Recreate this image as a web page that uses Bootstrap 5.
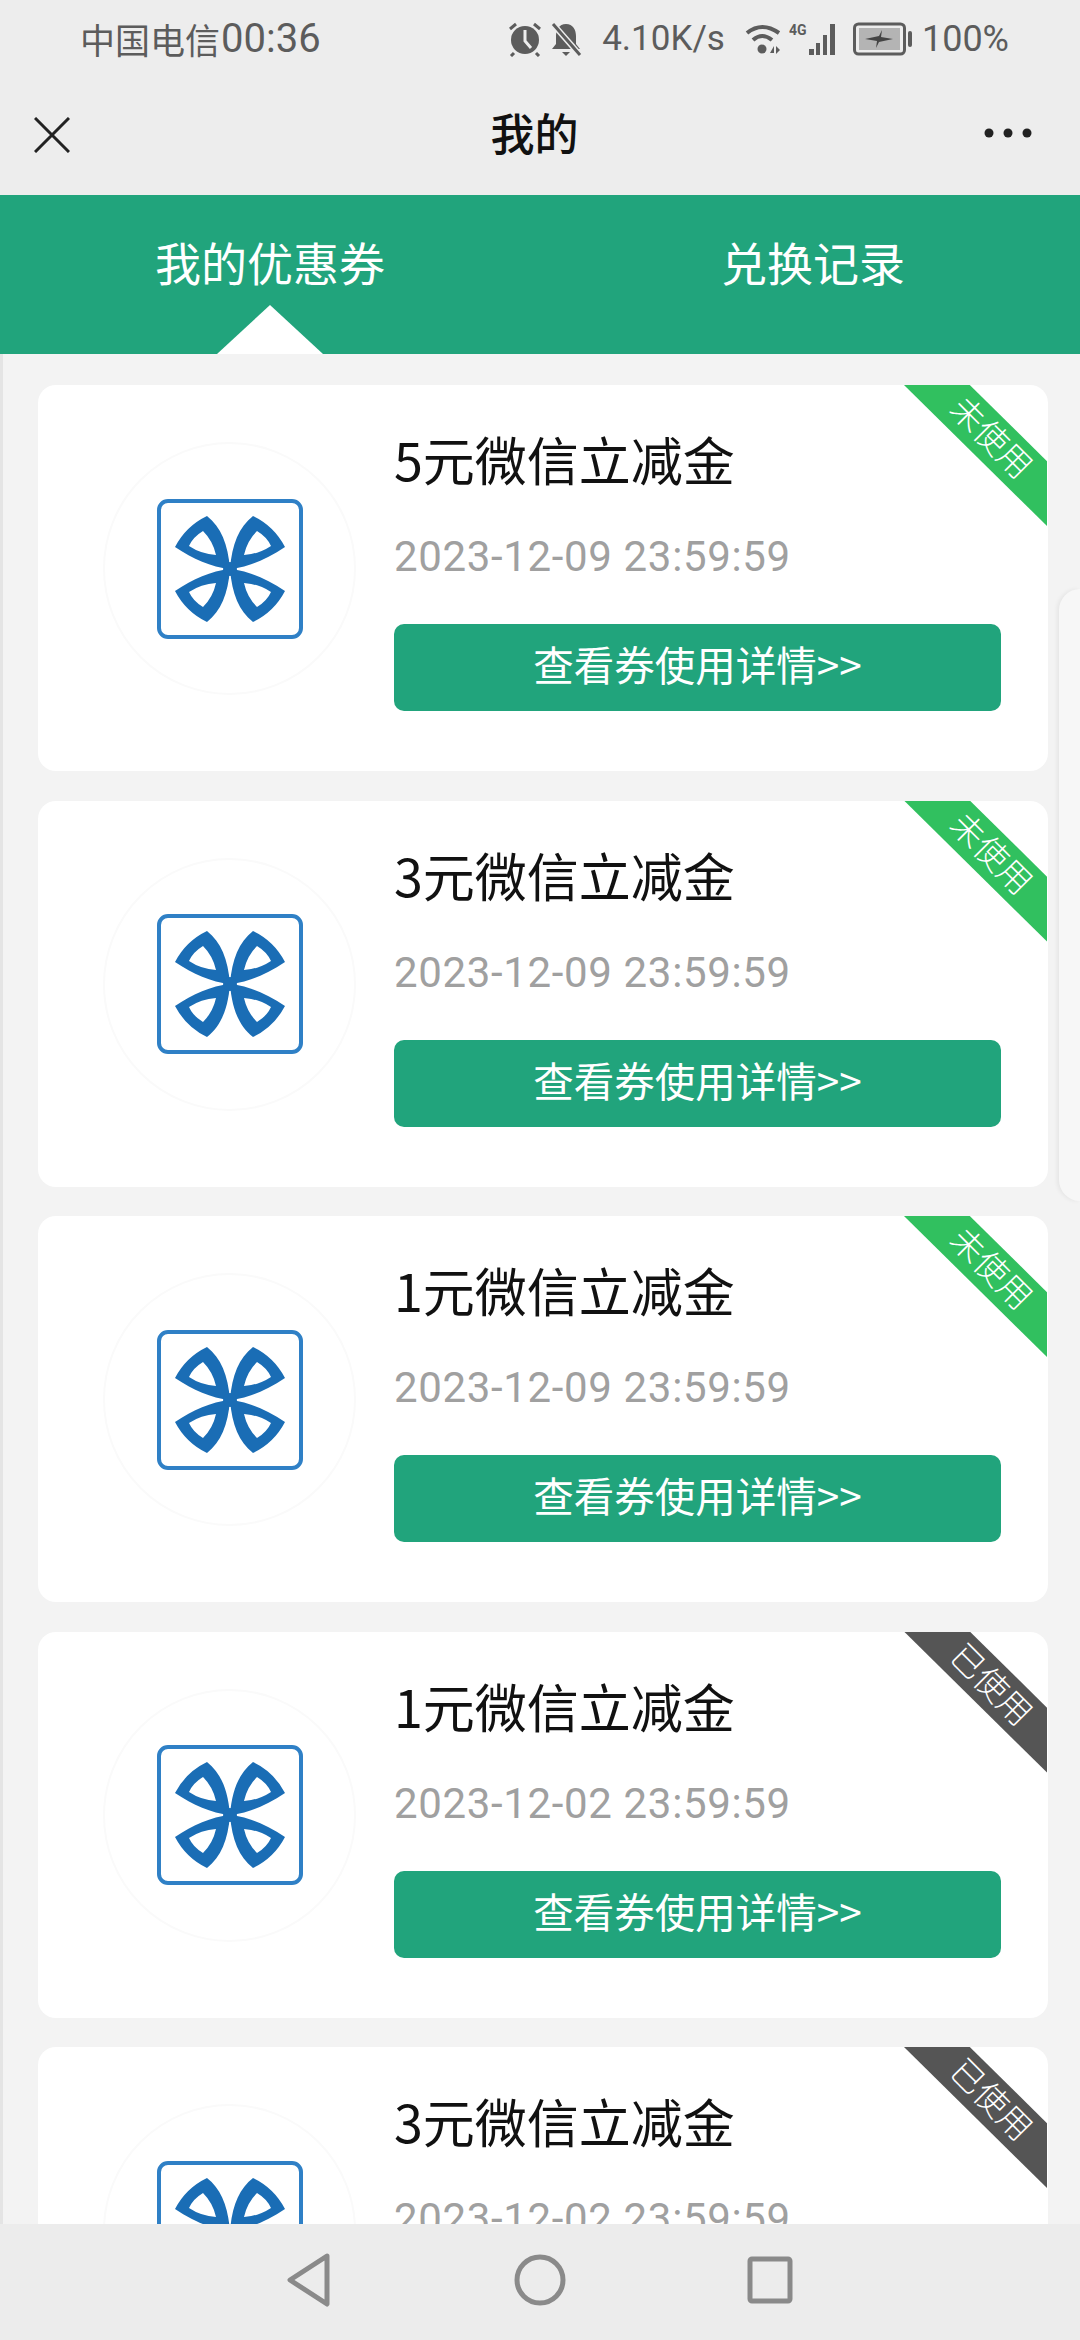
<!DOCTYPE html>
<html lang="zh-CN">
<head>
  <meta charset="UTF-8" />
  <meta name="viewport" content="width=device-width, initial-scale=1" />
  <title>我的</title>
  <link href="https://cdn.jsdelivr.net/npm/bootstrap@5.3.0/dist/css/bootstrap.min.css" rel="stylesheet" />
  <style>
    body {
      width: 1080px;
      height: 2340px;
      overflow: hidden;
      background: #f3f3f3;
      font-family: "Noto Sans CJK SC", "Noto Sans", sans-serif;
    }
    .status-bar { height: 78px; background: #ededed; color: #5c5c5c; font-size: 35px; padding: 0 71px 0 80px; }
    .status-time { font-family: Roboto, sans-serif; font-size: 40px; margin-left: -3px; }
    .status-nums { font-family: Roboto, sans-serif; font-size: 35px; }
    .status-speed { margin: 0 20px 0 4px; }
    .status-battery { margin-left: 14px; }
    .status-pct { margin-left: 9px; font-size: 36px; }
    .title-bar { height: 117px; background: #ededed; padding: 0 48px 0 34px; position: relative; }
    .title-text { position: absolute; left: 0; right: 0; top: 24px; text-align: center; font-size: 44px; font-weight: 500; color: #111; line-height: 60px; margin-left: -11px; }
    .tab-bar { height: 159px; background: #21a47c; color: #fff; font-size: 46px; }
    .tab-item { width: 540px; height: 132px; position: relative; }
    .tab-item-right { padding-left: 6px; }
    .tab-arrow { position: absolute; left: 217px; bottom: -27px; width: 106px; height: 49px; background: #fff; clip-path: polygon(50% 0, 100% 100%, 0 100%); }
    .coupon-list { height: 1870px; overflow: hidden; position: relative; padding: 31px 32px 0 35px; border-left: 3px solid #e4e4e4; gap: 29.5px; }
    .coupon { height: 386px; flex: 0 0 386px; background: #fff; border-radius: 18px; position: relative; padding-left: 65px; }
    .logo-circle { width: 253px; height: 253px; margin-top: 57px; border-radius: 50%; border: 2px solid #fafafa; }
    .logo-img { width: 146px; height: 140px; filter: blur(.6px); }
    .coupon-body { width: 607px; margin-left: 38px; padding-top: 39px; }
    .coupon-title { font-size: 52px; line-height: 70px; color: #111; margin-bottom: 38px; white-space: nowrap; }
    .coupon-date { font-family: Roboto, sans-serif; font-size: 42px; line-height: 50px; color: #a0a0a0; margin-bottom: 42px; letter-spacing: .65px; white-space: nowrap; }
    .coupon-btn { height: 87px; width: 607px; background: #21a47c; border: 0; border-radius: 10px; color: #fff; font-size: 40.500px; padding: 0 0 6px; }
    .ribbon { position: absolute; top: 0; right: 1px; width: 143px; height: 141px; background: #31c05f; clip-path: polygon(0 0, 46% 0, 100% 54%, 100% 100%); }
    .ribbon.used { background: #555; }
    .ribbon-text { position: absolute; left: 29px; top: 33px; width: 120px; text-align: center; transform: rotate(45deg); color: #fff; font-size: 33px; line-height: 36px; font-weight: 300; white-space: nowrap; }
    .side-panel { position: absolute; right: 0; top: 235px; width: 21px; height: 612px; background: #f7f7f7; border-radius: 32px 0 0 32px; box-shadow: -2px 0 4px rgba(0,0,0,.06); }
    .bottom-bar { height: 116px; background: #ececec; position: absolute; top: 2224px; left: 0; width: 1080px; }
    .bottom-bar svg { position: absolute; top: 29px; }
    .nav-back { left: 286px; }
    .nav-home { left: 514px; }
    .nav-recent { left: 747px; }
  </style>
</head>
<body>
  <svg width="0" height="0" class="position-absolute">
    <defs>
      <g id="petal">
        <path fill="#1a6db5" fill-rule="evenodd" d="M73 70C75 45 82 28 96 17Q117 27 128 48C110 60 92 68 73 70ZM100 32Q90 42 87 56Q102 55 114 47Q110 38 100 32Z" />
      </g>
      <g id="bank-logo">
        <rect x="2" y="2" width="142" height="136" rx="9" fill="#fff" stroke="#2f80c6" stroke-width="4" />
        <use href="#petal" />
        <use href="#petal" transform="matrix(-1 0 0 1 146 0)" />
        <use href="#petal" transform="matrix(1 0 0 -1 0 140)" />
        <use href="#petal" transform="matrix(-1 0 0 -1 146 140)" />
        <circle cx="73" cy="70" r="7" fill="#1a6db5" />
      </g>
    </defs>
  </svg>

  <!-- status bar -->
  <div class="status-bar d-flex align-items-center justify-content-between">
    <div class="d-flex align-items-center gap-1"><span>中国电信</span><span class="status-time">00:36</span></div>
    <div class="d-flex align-items-center">
      <svg width="34" height="36" viewBox="0 0 34 36" class="me-2">
        <circle cx="17" cy="19" r="14" fill="#5c5c5c" />
        <path d="M17 9v11l6 7" fill="none" stroke="#ededed" stroke-width="3" />
        <path d="M2 8l6-5M32 8l-6-5M6 32l-3 3M28 32l3 3" stroke="#5c5c5c" stroke-width="3" />
      </svg>
      <svg width="32" height="36" viewBox="0 0 32 36" class="me-3">
        <path d="M16 3c-7 0-10 6-10 12v8l-4 5h28l-4-5v-8c0-6-3-12-10-12zM12 31h8l-4 4z" fill="#5c5c5c" />
        <path d="M2 2l28 32" stroke="#ededed" stroke-width="6" />
        <path d="M3 3l27 31" stroke="#5c5c5c" stroke-width="3" />
      </svg>
      <span class="status-nums status-speed">4.10K/s</span>
      <svg width="36" height="34" viewBox="0 0 36 34">
        <path d="M2 11Q17-1 34 11M8 18Q17 10 27 18" fill="none" stroke="#5c5c5c" stroke-width="4" />
        <circle cx="17" cy="27" r="4.500" fill="#5c5c5c" />
        <path d="M25 31l4-7v7zM31 24l4 4-4 4z" fill="#5c5c5c" />
      </svg>
      <svg width="50" height="36" viewBox="0 0 50 36" class="ms-2">
        <text x="0" y="14" font-size="14" font-weight="700" fill="#5c5c5c" font-family="Roboto, sans-serif">4G</text>
        <path d="M20 28h5v6h-5zM27 22h4v12h-4zM34 14h4v20h-4zM41 3h5v31h-5z" fill="#5c5c5c" />
      </svg>
      <svg width="60" height="36" viewBox="0 0 60 36" class="status-battery">
        <rect x="1.500" y="3" width="50" height="30" rx="4" fill="none" stroke="#5c5c5c" stroke-width="3" />
        <rect x="6" y="7" width="41" height="22" fill="#b4b4b4" />
        <path d="M12 18l14-3 3-6-1 7 12 2-14 3-3 6 1-7z" fill="#444" />
        <rect x="55" y="10" width="4" height="16" rx="2" fill="#5c5c5c" />
      </svg>
      <span class="status-nums status-pct">100%</span>
    </div>
  </div>

  <!-- title bar -->
  <div class="title-bar d-flex align-items-center justify-content-between">
    <svg width="36" height="36" viewBox="0 0 36 36" class="mb-1"><path d="M1 1l34 34M35 1L1 35" stroke="#222" stroke-width="3" /></svg>
    <div class="title-text">我的</div>
    <svg width="48" height="10" viewBox="0 0 48 10" class="mb-2"><circle cx="5" cy="5" r="4.500" fill="#222" /><circle cx="24" cy="5" r="4.500" fill="#222" /><circle cx="43" cy="5" r="4.500" fill="#222" /></svg>
  </div>

  <!-- tabs -->
  <div class="tab-bar d-flex">
    <div class="tab-item d-flex align-items-center justify-content-center">我的优惠券<span class="tab-arrow"></span></div>
    <div class="tab-item tab-item-right d-flex align-items-center justify-content-center">兑换记录</div>
  </div>

  <!-- coupons -->
  <div id="couponList" class="coupon-list d-flex flex-column"></div>

  <div class="bottom-bar">
    <svg class="nav-back" width="46" height="54" viewBox="0 0 46 54"><path d="M41 3L4 27l37 24z" fill="none" stroke="#8a8a8a" stroke-width="5" stroke-linejoin="round" /></svg>
    <svg class="nav-home" width="52" height="54" viewBox="0 0 52 54"><circle cx="26" cy="27" r="23" fill="none" stroke="#8a8a8a" stroke-width="5" /></svg>
    <svg class="nav-recent" width="46" height="54" viewBox="0 0 46 54"><rect x="3" y="6" width="40" height="42" rx="2" fill="none" stroke="#8a8a8a" stroke-width="5" /></svg>
  </div>

  <script>
    // coupon data, top to bottom
    const coupons = [
      { name: "5元微信立减金", date: "2023-12-09 23:59:59", used: false },
      { name: "3元微信立减金", date: "2023-12-09 23:59:59", used: false },
      { name: "1元微信立减金", date: "2023-12-09 23:59:59", used: false },
      { name: "1元微信立减金", date: "2023-12-02 23:59:59", used: true },
      { name: "3元微信立减金", date: "2023-12-02 23:59:59", used: true }
    ];

    let html = "";
    for (const c of coupons) {
      html += `
      <div class="coupon d-flex">
        <div class="logo-circle d-flex align-items-center justify-content-center flex-shrink-0">
          <svg class="logo-img" viewBox="0 0 146 140"><use href="#bank-logo" /></svg>
        </div>
        <div class="coupon-body">
          <div class="coupon-title">${c.name}</div>
          <div class="coupon-date">${c.date}</div>
          <button class="btn coupon-btn">查看券使用详情&gt;&gt;</button>
        </div>
        <div class="ribbon ${c.used ? "used" : ""}"><span class="ribbon-text">${c.used ? "已使用" : "未使用"}</span></div>
      </div>`;
    }
    html += '<div class="side-panel"></div>';
    document.getElementById("couponList").innerHTML = html;
  </script>
  <script src="https://cdn.jsdelivr.net/npm/bootstrap@5.3.0/dist/js/bootstrap.bundle.min.js"></script>
</body>
</html>
